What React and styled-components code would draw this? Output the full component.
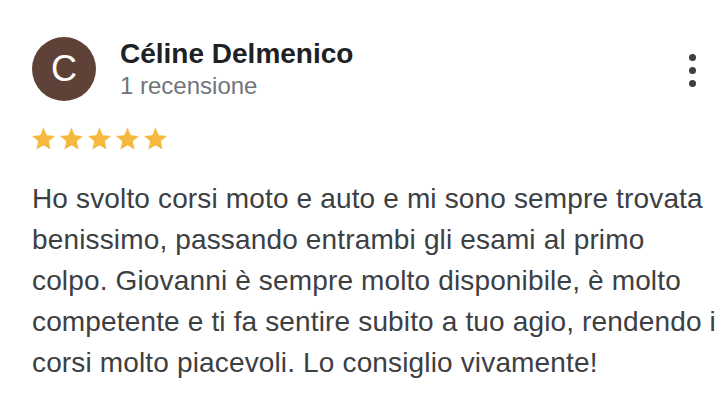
import React from "react";
import styled, { createGlobalStyle } from "styled-components";

const Global = createGlobalStyle`
  html, body { margin: 0; padding: 0; background: #fff; }
  body { font-family: "Liberation Sans", Arial, sans-serif; }
`;

const Card = styled.div`
  width: 728px;
  height: 414px;
  box-sizing: border-box;
  padding: 37px 24px 0 32px;
  display: flex;
  flex-direction: column;
`;

const Header = styled.div`
  display: flex;
  align-items: flex-start;
`;

const Avatar = styled.div`
  width: 64px;
  height: 64px;
  border-radius: 50%;
  background: #5e4238;
  color: #fff;
  font-size: 36px;
  display: flex;
  align-items: center;
  justify-content: center;
  flex-shrink: 0;
`;

const Info = styled.div`
  margin-left: 24px;
  display: flex;
  flex-direction: column;
  flex: 1;
`;

const Name = styled.div`
  font-size: 28px;
  font-weight: bold;
  color: #202124;
  line-height: 34px;
`;

const Count = styled.div`
  font-size: 24px;
  color: #70757a;
  line-height: 29px;
`;

const Menu = styled.div`
  display: flex;
  flex-direction: column;
  gap: 6px;
  margin-top: 17px;
  margin-right: 8px;
`;

const Dot = styled.span`
  width: 7px;
  height: 7px;
  border-radius: 50%;
  background: #3c4043;
`;

const Stars = styled.div`
  display: flex;
  gap: 5px;
  margin-top: 26px;
`;

const Text = styled.p`
  margin: 28px 0 0;
  font-size: 28px;
  line-height: 41px;
  letter-spacing: 0.15px;
  color: #3c4043;
  white-space: nowrap;
`;

const Star = () => (
  <svg width="23" height="23" viewBox="2 1.5 20 20">
    <path
      fill="#f4b93d"
      d="M12 17.27L18.18 21l-1.64-7.03L22 9.24l-7.19-.61L12 2 9.19 8.63 2 9.24l5.46 4.73L5.82 21z"
    />
  </svg>
);

const lines = [
  "Ho svolto corsi moto e auto e mi sono sempre trovata",
  "benissimo, passando entrambi gli esami al primo",
  "colpo. Giovanni è sempre molto disponibile, è molto",
  "competente e ti fa sentire subito a tuo agio, rendendo i",
  "corsi molto piacevoli. Lo consiglio vivamente!",
];

export default function App() {
  return (
    <>
      <Global />
      <Card>
        <Header>
          <Avatar>C</Avatar>
          <Info>
            <Name>Céline Delmenico</Name>
            <Count>1 recensione</Count>
          </Info>
          <Menu>
            <Dot />
            <Dot />
            <Dot />
          </Menu>
        </Header>
        <Stars>
          {[0, 1, 2, 3, 4].map((i) => (
            <Star key={i} />
          ))}
        </Stars>
        <Text>
          {lines.map((l, i) => (
            <React.Fragment key={i}>
              {l}
              {i < lines.length - 1 && <br />}
            </React.Fragment>
          ))}
        </Text>
      </Card>
    </>
  );
}
